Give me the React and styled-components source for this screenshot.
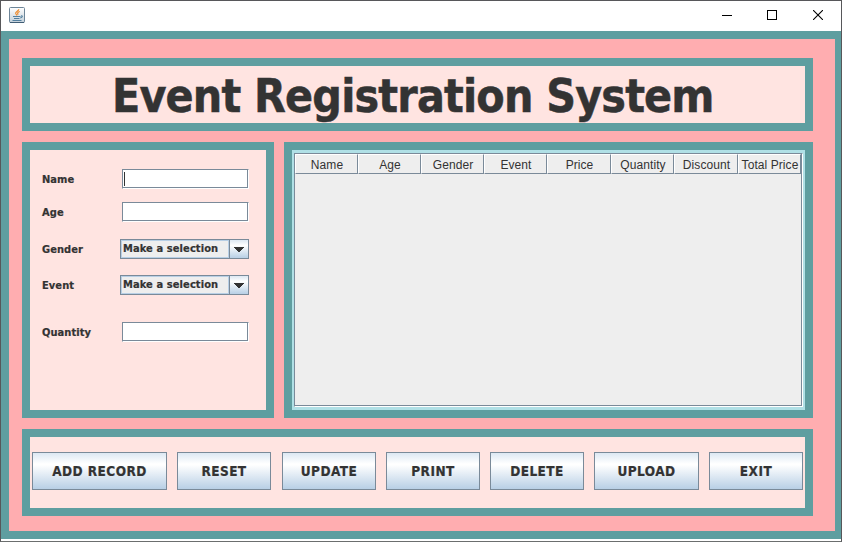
import React from "react";
import styled, { createGlobalStyle } from "styled-components";

const Global = createGlobalStyle`
  * { box-sizing: border-box; }
  body { margin: 0; background: #57575a; overflow: hidden; }
`;

const UI_FONT = '"DejaVu Sans Condensed", "DejaVu Sans", sans-serif';

const Window = styled.div`
  width: 842px;
  height: 542px;
  display: flex;
  flex-direction: column;
  border: 1px solid #57575a;
  border-bottom-color: #6b6e6e;
  background: #fff;
  padding-bottom: 2px;
  color: #333;
`;

const TitleBar = styled.header`
  height: 30px;
  flex: none;
  display: flex;
  align-items: flex-start;
  justify-content: space-between;
  padding: 6px 0 0 8px;
  background: #fff;
`;

const Controls = styled.div`
  display: flex;
`;

const ControlButton = styled.div`
  width: ${(p) => p.$width || 46}px;
  height: 16px;
  display: flex;
  align-items: center;
  justify-content: center;
  svg { display: block; }
`;

const Content = styled.main`
  flex: 1;
  display: flex;
  flex-direction: column;
  background: #ffadb0;
  border: 8px solid #5f9ea0;
  border-right-width: 6px;
  padding: 19px 22px 15px 13px;
  gap: 11px;
`;

const Panel = styled.section`
  background: #ffe4e1;
  border: 8px solid #5f9ea0;
`;

const TitlePanel = styled(Panel)`
  height: 73px;
  display: flex;
  align-items: center;
  padding: 4px 0 0 82px;
`;

const Heading = styled.h1`
  margin: 0;
  font: bold 46px/57px ${UI_FONT};
  font-stretch: condensed;
  letter-spacing: -0.82px;
  -webkit-text-stroke: 0.5px #333;
  white-space: nowrap;
`;

const Middle = styled.div`
  display: flex;
  gap: 10px;
  height: 276px;
`;

const FormPanel = styled(Panel)`
  width: 252px;
  padding: 19px 0 0 12px;
`;

const FormRow = styled.div`
  display: flex;
  align-items: center;
  height: 20px;
  margin-bottom: ${(p) => p.$after || 0}px;
`;

const Label = styled.label`
  width: 78px;
  height: 20px;
  font: bold 11px/22px ${UI_FONT};
  font-stretch: condensed;
  letter-spacing: 0.07px;
  -webkit-text-stroke: 0.2px #333;
`;

const TextField = styled.div`
  width: 127px;
  height: 20px;
  margin-left: 2px;
  padding: 2px 1px;
  background: #fff;
  border: 1px solid #7a8a99;
  border-right-color: #fff;
  border-bottom-color: #fff;
  box-shadow: inset -1px -1px #7a8a99;
`;

const Caret = styled.div`
  width: 1px;
  height: 14px;
  background: #333;
`;

const Combo = styled.div`
  width: 129px;
  height: 20px;
  display: flex;
  border: 1px solid #7a8a99;
`;

const ComboValue = styled.div`
  flex: 1;
  height: 18px;
  background: #eee;
  border: 1px solid #b8cfe5;
  padding-left: 1px;
  font: bold 11px/15px ${UI_FONT};
  font-stretch: condensed;
  letter-spacing: 0.1px;
  -webkit-text-stroke: 0.2px #333;
  white-space: nowrap;
`;

const ComboArrow = styled.div`
  width: 19px;
  height: 18px;
  display: flex;
  align-items: center;
  justify-content: center;
  border-left: 1px solid #7a8a99;
  background: linear-gradient(#dde8f3 0%, #fff 30%, #b8cfe5 100%);
`;

const TablePanel = styled(Panel)`
  flex: 1;
  background: #b0e0e6;
  padding: 3px 2px;
`;

const ScrollPane = styled.div`
  height: 254px;
  border: 1px solid #7a8a99;
  border-right-color: #fff;
  border-bottom-color: #fff;
  box-shadow: inset -1px -1px #7a8a99;
  background: #eee;
`;

const HeaderRow = styled.div`
  display: grid;
  grid-template-columns: 63px 63px 63px 63px 64px 63px 64px 63px;
  height: 20px;
`;

const HeaderCell = styled.div`
  height: 20px;
  border: 1px solid #7a8a99;
  border-top-color: #fff;
  border-left-color: #fff;
  background: #eee;
  font: 12px/20px "Liberation Sans", Arial, sans-serif;
  letter-spacing: 0.08px;
  padding-left: 1px;
  text-align: center;
  white-space: nowrap;
`;

const ButtonPanel = styled(Panel)`
  height: 87px;
  padding: 15px 2px 0;
  display: flex;
  gap: 10px;
`;

const ActionButton = styled.button`
  width: ${(p) => p.$width || 94}px;
  height: 38px;
  padding: 1px 0 0;
  margin: 0 0 0 ${(p) => p.$offset || 0}px;
  border: 1px solid #7a8a99;
  border-radius: 0;
  background: linear-gradient(#dde8f3 0%, #fff 30%, #fff 33%, #b8cfe5 100%);
  color: #333;
  font: bold 13.5px/35px ${UI_FONT};
  font-stretch: condensed;
  letter-spacing: 0.45px;
  -webkit-text-stroke: 0.2px #333;
  white-space: nowrap;
`;

const JavaIcon = () => (
  <svg width="16" height="16" viewBox="0 0 16 16">
    <defs>
      <linearGradient id="tile" x1="0" y1="0" x2="0" y2="1">
        <stop offset="0" stopColor="#fff" />
        <stop offset="1" stopColor="#c3d0da" />
      </linearGradient>
    </defs>
    <rect x="0.5" y="0.5" width="15" height="15" rx="1" fill="url(#tile)" stroke="#6d8598" />
    <path d="M1 15.5h14" stroke="#405d75" />
    <path d="M9.8 2.2C10 4 6 4.5 6.7 6.5L8 8.5M10.8 4.5C8 5.5 8.5 6.5 9.1 7.8" fill="none" stroke="#ed8b2d" strokeWidth="1.2" />
    <path d="M4 9.5h7.5M5 11.5h5.5M12 8.7c2 0 1.7 2-.8 2.3M3.5 13.5h9" fill="none" stroke="#54809f" strokeWidth="1.1" />
  </svg>
);

const ArrowIcon = () => (
  <svg width="10" height="5" viewBox="0 0 10 5" shapeRendering="crispEdges">
    <path d="M0 0h10v1H9v1H8v1H7v1H6v1H4V4H3V3H2V2H1V1H0z" fill="#333" />
  </svg>
);

const fields = [
  { label: "Name", after: 13, focused: true },
  { label: "Age", after: 17 },
  { label: "Gender", after: 16, combo: true },
  { label: "Event", after: 27, combo: true },
  { label: "Quantity", after: 0 },
];

const columns = ["Name", "Age", "Gender", "Event", "Price", "Quantity", "Discount", "Total Price"];

const actions = [
  { text: "ADD RECORD", width: 135 },
  { text: "RESET" },
  { text: "UPDATE", offset: 1 },
  { text: "PRINT" },
  { text: "DELETE" },
  { text: "UPLOAD", width: 105 },
  { text: "EXIT" },
];

export default function App() {
  return (
    <>
      <Global />
      <Window>
        <TitleBar>
          <JavaIcon />
          <Controls>
            <ControlButton $width={45}>
              <svg width="10" height="10" shapeRendering="crispEdges"><path d="M0 5.5h10" stroke="#000" /></svg>
            </ControlButton>
            <ControlButton>
              <svg width="10" height="10" shapeRendering="crispEdges"><rect x="0.5" y="0.5" width="9" height="9" fill="none" stroke="#000" /></svg>
            </ControlButton>
            <ControlButton>
              <svg width="10" height="10"><path d="M0 0L10 10M10 0L0 10" stroke="#000" strokeWidth="1.1" /></svg>
            </ControlButton>
          </Controls>
        </TitleBar>
        <Content>
          <TitlePanel>
            <Heading>Event Registration System</Heading>
          </TitlePanel>
          <Middle>
            <FormPanel>
              {fields.map((f) => (
                <FormRow key={f.label} $after={f.after}>
                  <Label>{f.label}</Label>
                  {f.combo ? (
                    <Combo>
                      <ComboValue>Make a selection</ComboValue>
                      <ComboArrow><ArrowIcon /></ComboArrow>
                    </Combo>
                  ) : (
                    <TextField>{f.focused && <Caret />}</TextField>
                  )}
                </FormRow>
              ))}
            </FormPanel>
            <TablePanel>
              <ScrollPane>
                <HeaderRow>
                  {columns.map((c) => <HeaderCell key={c}>{c}</HeaderCell>)}
                </HeaderRow>
              </ScrollPane>
            </TablePanel>
          </Middle>
          <ButtonPanel>
            {actions.map((a) => (
              <ActionButton key={a.text} $width={a.width} $offset={a.offset}>{a.text}</ActionButton>
            ))}
          </ButtonPanel>
        </Content>
      </Window>
    </>
  );
}
